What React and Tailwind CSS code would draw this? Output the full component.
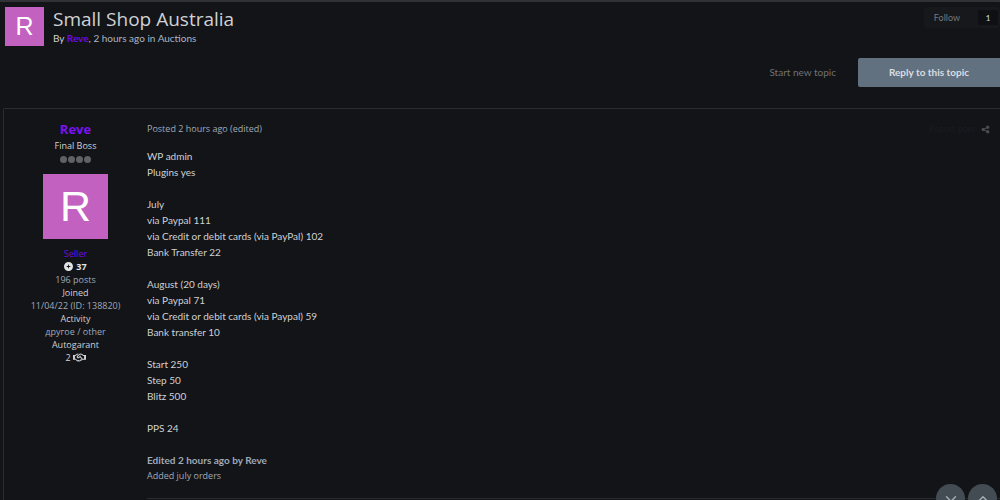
import { FaCirclePlus, FaRegHandshake, FaShareNodes } from "react-icons/fa6";
import { ChevronDown, ChevronUp } from "lucide-react";

const postGroups = [
    ['WP admin', 'Plugins yes'],
    ['July', 'via Paypal 111', 'via Credit or debit cards (via PayPal) 102', 'Bank Transfer 22'],
    ['August (20 days)', 'via Paypal 71', 'via Credit or debit cards (via Paypal) 59', 'Bank transfer 10'],
    ['Start 250', 'Step 50', 'Blitz 500'],
    ['PPS 24'],
];

const Avatar = ({ className }) => (
    <a href="#reve" aria-label="Reve" className={`flex items-center justify-center shrink-0 bg-[#c261bf] text-white font-['Liberation_Sans',sans-serif] ${className}`}>
        R
    </a>
);

const TopicHeader = () => (
    <header className="flex items-start pl-[5px] pt-[5px]">
        <Avatar className="size-[39px] text-[25px]" />
        <div className="pl-[9px] flex-1">
            <h1 className="text-[19px] leading-[24px] text-[#d0d1d3] font-['Open_Sans',sans-serif]">Small Shop Australia</h1>
            <p className="text-[10px] leading-[14px] text-[#a9b4c6]">
                <span className="text-[#d0d1d3]">By </span>
                <a href="#reve" className="font-bold text-[#6d0be0]">Reve</a>, 2 hours ago in <a href="#auctions">Auctions</a>
            </p>
        </div>
        <div className="flex items-center h-[21px] bg-[#17181b] rounded-sm text-[9px]">
            <button type="button" className="pl-[10px] pr-[18px] text-[#75777a]">Follow</button>
            <a href="#followers" className="flex items-center justify-center w-[20px] h-[15px] mr-[2px] bg-[#0f1013] text-[8px] font-semibold text-[#c5c6c8]">1</a>
        </div>
    </header>
);

const TopicActions = () => (
    <div className="flex justify-end items-center mt-3 text-[10px]">
        <button type="button" className="px-[22px] text-[#6f7275]">Start new topic</button>
        <button type="button" className="w-[142px] h-[29px] rounded-l-xs bg-[#62717f] font-bold text-[#d9dee3]">Reply to this topic</button>
    </div>
);

const AuthorPane = () => (
    <aside className="w-[143px] shrink-0 flex flex-col items-center pt-[11px] text-center text-[9px] leading-[13px] text-[#d0d1d3] font-['Open_Sans','Noto_Sans',sans-serif]">
        <h3 className="text-[13px] leading-[19px] font-bold"><a href="#reve" className="text-[#7a12f0]">Reve</a></h3>
        <p>Final Boss</p>
        <div className="flex gap-px my-[4px]" aria-hidden="true">
            {[0, 1, 2, 3].map((pip) => (
                <span key={pip} className="size-[7px] rounded-full bg-[#606164]" />
            ))}
        </div>
        <Avatar className="size-[65px] mt-[7px] mb-[8px] text-[43px]" />
        <p className="text-[#6d0be0]">Seller</p>
        <p className="flex items-center gap-[3px] font-bold text-[#e2e3e4]"><FaCirclePlus size={9} />37</p>
        <p className="text-[#a0a9b7]">196 posts</p>
        <p>Joined</p>
        <p className="text-[#a0a9b7]">11/04/22 (ID: 138820)</p>
        <p>Activity</p>
        <p className="text-[#a0a9b7]">другое / other</p>
        <p>Autogarant</p>
        <p className="flex items-center gap-[2px]">2 <FaRegHandshake size={13} /></p>
    </aside>
);

const PostBody = () => (
    <div className="flex-1 pt-3 text-[10px] leading-[16px] text-[#d0d1d3]">
        <div className="flex justify-between items-center pr-[10px]">
            <p className="text-[9px] text-[#a0a9b7] font-['Open_Sans',sans-serif]">Posted 2 hours ago (edited)</p>
            <div className="flex items-center gap-[6px]">
                <a href="#report" className="text-[9px] text-[#1b1c20]">Report post</a>
                <button type="button" aria-label="Share" className="text-[#4a4b4e]"><FaShareNodes size={9} /></button>
            </div>
        </div>
        <div className="flex flex-col gap-[16px] mt-[11px]">
            {postGroups.map((lines) => (
                <div key={lines[0]}>
                    {lines.map((line) => <p key={line}>{line}</p>)}
                </div>
            ))}
        </div>
        <div className="mt-[16px] text-[#a0a9b7]">
            <p className="font-bold">Edited 2 hours ago by Reve</p>
            <p className="text-[9px] font-['Open_Sans',sans-serif]">Added july orders</p>
        </div>
        <div className="mt-[14px] border-t border-[#2b2c2f]" />
    </div>
);

export default function App() {
    return (
        <div className="min-h-screen flex flex-col bg-[#121418] border-t-2 border-[#303236] font-['Lato','Noto_Sans',sans-serif]">
            <TopicHeader />
            <TopicActions />
            <article className="flex flex-1 mt-[21px] ml-[3px] border-t border-l border-[#2b2c2f] rounded-tl-xs">
                <AuthorPane />
                <PostBody />
            </article>
            <nav className="fixed right-[3px] -bottom-[13px] flex gap-[3px] text-[#a3acb3]">
                <button type="button" aria-label="Scroll down" className="flex justify-center items-center size-[29px] rounded-full bg-[#434c53]"><ChevronDown size={18} strokeWidth={2} /></button>
                <button type="button" aria-label="Scroll up" className="flex justify-center items-center size-[29px] rounded-full bg-[#434c53]"><ChevronUp size={18} strokeWidth={2} /></button>
            </nav>
        </div>
    );
}
